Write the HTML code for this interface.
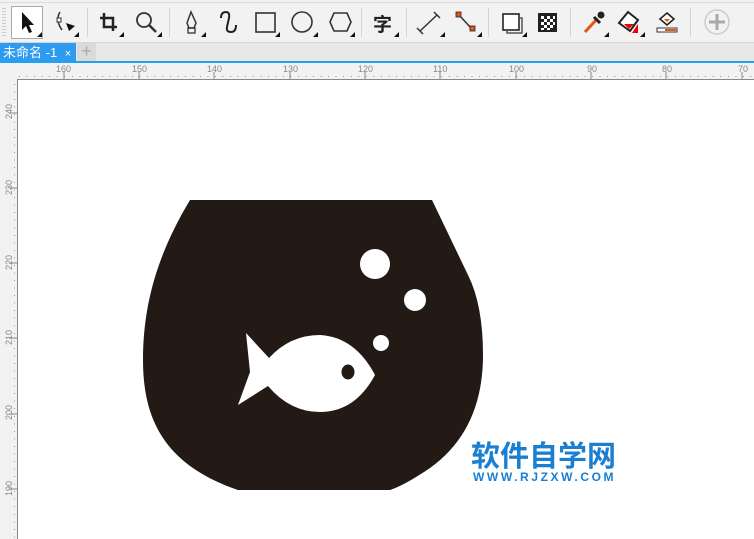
<!DOCTYPE html>
<html><head><meta charset="utf-8"><style>
*{margin:0;padding:0;box-sizing:border-box}
body{width:754px;height:539px;overflow:hidden;background:#f2f2f2;position:relative;font-family:"Liberation Sans","Noto Sans CJK SC",sans-serif}
.abs{position:absolute}
.sep{position:absolute;top:8px;width:1px;height:29px;background:#d4d4d4}
.tri{position:absolute;width:0;height:0;border-left:5px solid transparent;border-bottom:5px solid #111}
.rl{position:absolute;font-size:9px;color:#888}
.vl{position:absolute;font-size:9px;color:#888;transform:rotate(-90deg);transform-origin:left top;left:4px}
</style></head><body>
<div class="abs" style="left:0;top:2px;width:754px;height:1px;background:#dcdcdc"></div>
<div class="abs" style="left:2px;top:8px;width:4px;height:30px;background:repeating-linear-gradient(#ccc 0 1px,transparent 1px 3px)"></div>
<div class="abs" style="left:11px;top:6px;width:32px;height:33px;background:#fff;border:1px solid #aaa"></div>
<svg class="abs" style="left:0;top:0" width="754" height="42">
<path d="M22 12 L22 30 L26 26 L29 33 L32 32 L29 25 L34 25 Z" fill="#111"/>
<path d="M60 12 Q55 20 62 30" fill="none" stroke="#333" stroke-width="1.5"/><rect x="57" y="18" width="4" height="4" fill="#fff" stroke="#333"/>
<path d="M66 23 L75 26 L69 31Z" fill="#111"/>
<path d="M104 13 V27 H117 M100 18 H113 V31" fill="none" stroke="#222" stroke-width="2.5"/>
<circle cx="144" cy="20" r="7" fill="none" stroke="#333" stroke-width="1.8"/><path d="M149 25 L156 32" stroke="#333" stroke-width="2.5"/>
<path d="M191 12 L187 23 L189 28 H194 L196 23 Z" fill="none" stroke="#333" stroke-width="1.5"/><rect x="188" y="28" width="7" height="5" fill="none" stroke="#333" stroke-width="1.3"/>
<path d="M221 18 Q221 12 226 12 Q230 12 229 18 L227 27 Q226 32 231 32 Q236 32 236 25" fill="none" stroke="#222" stroke-width="2"/>
<rect x="256" y="13" width="19" height="19" fill="none" stroke="#333" stroke-width="1.6"/>
<circle cx="302" cy="22" r="10" fill="none" stroke="#333" stroke-width="1.6"/>
<path d="M334 13 H347 L351 22 L347 31 H334 L330 22 Z" fill="none" stroke="#333" stroke-width="1.6"/>
<text x="373" y="31" font-size="19" font-weight="bold" fill="#222" font-family="Noto Sans CJK SC,sans-serif">字</text>
<path d="M420 31 L437 15 M417 28 L423 34 M434 12 L440 18" stroke="#333" stroke-width="1.5"/>
<path d="M459 15 L471 28" stroke="#333" stroke-width="1.5"/><rect x="456" y="12" width="5" height="5" fill="#e2560e" stroke="#222" stroke-width=".8"/><rect x="470" y="26" width="5" height="5" fill="#e2560e" stroke="#222" stroke-width=".8"/>
<rect x="503" y="14" width="16" height="16" fill="#fff" stroke="#222" stroke-width="1.6"/><path d="M519 18 H522 V33 H507 V30" fill="none" stroke="#555" stroke-width="1.5"/>
<rect x="538" y="13" width="19" height="19" fill="#222"/>
<g fill="#fff"><rect x="541" y="16" width="3" height="3"/><rect x="547" y="16" width="3" height="3"/><rect x="553" y="16" width="2" height="3"/><rect x="544" y="19" width="3" height="3"/><rect x="550" y="19" width="3" height="3"/><rect x="541" y="22" width="3" height="3"/><rect x="547" y="22" width="3" height="3"/><rect x="553" y="22" width="2" height="3"/><rect x="544" y="25" width="3" height="3"/><rect x="550" y="25" width="3" height="3"/><rect x="541" y="28" width="3" height="2"/><rect x="547" y="28" width="3" height="2"/></g>
<path d="M585 32 L597 19" stroke="#e2560e" stroke-width="3"/><path d="M594 17 L600 23" stroke="#222" stroke-width="3"/><circle cx="601" cy="15" r="3.5" fill="#222"/>
<path d="M628 12 L638 20 L630 31 L619 23 Z" fill="#fff" stroke="#222" stroke-width="2"/><path d="M624 24 H634 L629 29Z" fill="#e00"/><path d="M638 24 L638 33 L632 33Z" fill="#e00"/>
<path d="M667 13 L674 19 L667 25 L660 19Z" fill="#fff" stroke="#222" stroke-width="1.6"/><path d="M664 19 H670 L667 22Z" fill="#e2560e"/><rect x="657" y="28" width="20" height="4" fill="#fff" stroke="#333"/><rect x="665" y="29" width="11" height="2" fill="#e2560e"/>
<circle cx="717" cy="22" r="12" fill="none" stroke="#ccc" stroke-width="1.5"/><path d="M717 14 V30 M709 22 H725" stroke="#aaa" stroke-width="3"/>
</svg>
<div class="tri" style="left:37px;top:32px"></div><div class="tri" style="left:74px;top:32px"></div><div class="tri" style="left:119px;top:32px"></div><div class="tri" style="left:157px;top:32px"></div><div class="tri" style="left:201px;top:32px"></div><div class="tri" style="left:275px;top:32px"></div><div class="tri" style="left:313px;top:32px"></div><div class="tri" style="left:350px;top:32px"></div><div class="tri" style="left:394px;top:32px"></div><div class="tri" style="left:440px;top:32px"></div><div class="tri" style="left:477px;top:32px"></div><div class="tri" style="left:522px;top:32px"></div><div class="tri" style="left:604px;top:32px"></div><div class="tri" style="left:640px;top:32px"></div>
<div class="sep" style="left:87px"></div><div class="sep" style="left:169px"></div><div class="sep" style="left:361px"></div><div class="sep" style="left:406px"></div><div class="sep" style="left:488px"></div><div class="sep" style="left:570px"></div><div class="sep" style="left:690px"></div>
<div class="abs" style="left:0;top:42px;width:754px;height:1px;background:#d6d6d6"></div>
<div class="abs" style="left:0;top:43px;width:754px;height:19px;background:#e8e8e8"></div>
<div class="abs" style="left:0;top:43px;width:76px;height:19px;background:#2d9bf0;color:#fff;font-size:13px;line-height:19px;padding-left:3px">未命名 -1 <span style="font-size:11px;margin-left:4px">×</span></div>
<div class="abs" style="left:77px;top:43px;width:19px;height:18px;background:#dadada;color:#aaa;font-size:18px;line-height:17px;text-align:center">+</div>
<div class="abs" style="left:0;top:61px;width:754px;height:2px;background:#1fa3f0"></div>
<div class="abs" style="left:17px;top:79px;width:737px;height:1px;background:#888"></div>
<div class="abs" style="left:17px;top:79px;width:1px;height:460px;background:#888"></div>
<div class="abs" style="left:18px;top:76px;width:736px;height:1px;background:repeating-linear-gradient(90deg,#999 0 1px,transparent 1px 7.54px);background-position:1px 0"></div>
<div class="abs" style="left:14px;top:80px;width:1px;height:459px;background:repeating-linear-gradient(#999 0 1px,transparent 1px 7.54px);background-position:0 4px"></div>
<svg class="abs" style="left:0;top:62px" width="754" height="18"><g stroke="#888">
<path d="M64 10V17M139 10V17M214 10V17M290 10V17M365 10V17M440 10V17M516 10V17M591 10V17M666 10V17M742 10V17"/></g></svg>
<svg class="abs" style="left:0;top:80px" width="17" height="459"><g stroke="#888">
<path d="M9 33H17M9 108H17M9 183H17M9 258H17M9 334H17M9 409H17"/></g></svg>
<div class="rl" style="left:56px;top:64px">160</div><div class="rl" style="left:132px;top:64px">150</div><div class="rl" style="left:207px;top:64px">140</div><div class="rl" style="left:283px;top:64px">130</div><div class="rl" style="left:358px;top:64px">120</div><div class="rl" style="left:433px;top:64px">110</div><div class="rl" style="left:509px;top:64px">100</div><div class="rl" style="left:587px;top:64px">90</div><div class="rl" style="left:662px;top:64px">80</div><div class="rl" style="left:738px;top:64px">70</div>
<div class="vl" style="top:119px">240</div><div class="vl" style="top:195px">230</div><div class="vl" style="top:270px">220</div><div class="vl" style="top:345px">210</div><div class="vl" style="top:420px">200</div><div class="vl" style="top:496px">190</div>
<div class="abs" style="left:18px;top:80px;width:736px;height:459px;background:#fff"></div>
<svg class="abs" style="left:0;top:0" width="754" height="539">
<path d="M190 200 L432 200 L468 275 Q483 305 483 355 Q483 430 430 468 Q405 485 390 490 L238 490 C165 465 143 420 143 360 C143 300 160 250 190 200 Z" fill="#231a16"/>
<circle cx="375" cy="264" r="15" fill="#fff"/><circle cx="415" cy="300" r="11" fill="#fff"/><circle cx="381" cy="343" r="8" fill="#fff"/>
<path d="M246 333 L269 358 Q290 335 320 335 Q355 337 375 375 Q355 412 320 412 Q290 412 268 386 L238 405 L250 372 Z" fill="#fff"/>
<ellipse cx="348" cy="372" rx="6.5" ry="7.5" fill="#231a16"/>
<text x="471" y="466" font-size="29" font-weight="bold" fill="#1a7fd0" font-family="Noto Sans CJK SC,sans-serif">软件自学网</text>
<text x="473" y="481" font-size="12" font-weight="bold" fill="#1a7fd0" font-family="Liberation Sans,sans-serif" letter-spacing="2.6">WWW.RJZXW.COM</text>
</svg>
</body></html>
